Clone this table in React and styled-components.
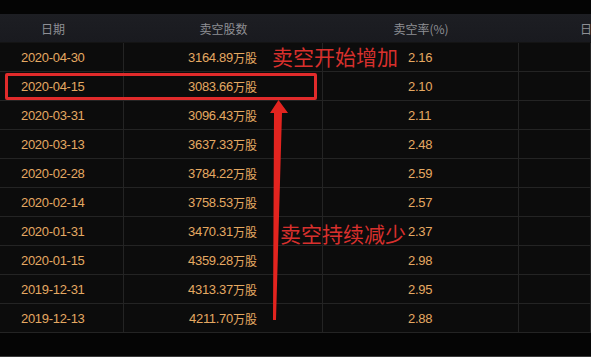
import React from 'react';
import styled, { createGlobalStyle } from 'styled-components';

const GlobalStyle = createGlobalStyle`
  html, body {
    margin: 0;
    padding: 0;
    background-color: #050505;
    overflow: hidden;
  }
`;

const COLUMNS = '124px 199px 196px 1fr';

const Page = styled.div`
  position: relative;
  width: 591px;
  height: 357px;
  overflow: hidden;
  background-color: #050505;
  font-family: "Liberation Sans", "Noto Sans CJK SC", sans-serif;
`;

const TopBand = styled.div`
  height: 14px;
  background-color: #040404;
`;

const HeaderRow = styled.div`
  display: grid;
  grid-template-columns: ${COLUMNS};
  height: 28px;
  background: linear-gradient(#1d1e23, #191a1f);
  border-bottom: 1px solid #141414;
`;

const HeaderCell = styled.div`
  display: flex;
  align-items: center;
  justify-content: ${(p) => (p.$left ? 'flex-start' : 'center')};
  padding-left: ${(p) => p.$pad || 0}px;
  padding-right: ${(p) => p.$padRight || 0}px;
  font-family: "Noto Sans CJK SC", sans-serif;
  font-size: 12px;
  color: #8e8f94;
  white-space: nowrap;
`;

const Body = styled.div`
  background-color: #0c0c0c;
`;

const Row = styled.div`
  display: grid;
  grid-template-columns: ${COLUMNS};
  height: 28px;
  border-bottom: 1px solid #242424;
`;

const Cell = styled.div`
  display: flex;
  align-items: center;
  justify-content: ${(p) => p.$align || 'flex-start'};
  padding-left: ${(p) => p.$pad || 0}px;
  padding-right: ${(p) => p.$padRight || 0}px;
  border-right: 1px solid #242424;
  font-size: 13px;
  letter-spacing: -0.3px;
  color: #e5a962;
  white-space: nowrap;
`;

const Unit = styled.span`
  font-family: "Noto Sans CJK SC", sans-serif;
  font-size: 12px;
  letter-spacing: 0;
`;

const Footer = styled.div`
  height: 23px;
  border-bottom: 1px solid #3a3a3a;
`;

const Highlight = styled.div`
  position: absolute;
  left: 5px;
  top: 73px;
  width: 306px;
  height: 21px;
  border: 3px solid #e12b2b;
  border-radius: 2px;
`;

const Note = styled.div`
  position: absolute;
  left: ${(p) => p.$x}px;
  top: ${(p) => p.$y}px;
  font-family: "Noto Sans CJK SC", sans-serif;
  font-size: 21px;
  line-height: 1;
  color: #d8302d;
  white-space: nowrap;
`;

const Arrow = styled.svg`
  position: absolute;
  left: 0;
  top: 0;
`;

const rows = [
  ['2020-04-30', '3164.89', '2.16'],
  ['2020-04-15', '3083.66', '2.10'],
  ['2020-03-31', '3096.43', '2.11'],
  ['2020-03-13', '3637.33', '2.48'],
  ['2020-02-28', '3784.22', '2.59'],
  ['2020-02-14', '3758.53', '2.57'],
  ['2020-01-31', '3470.31', '2.37'],
  ['2020-01-15', '4359.28', '2.98'],
  ['2019-12-31', '4313.37', '2.95'],
  ['2019-12-13', '4211.70', '2.88'],
];

export default function App() {
  return (
    <Page>
      <GlobalStyle />
      <TopBand />
      <HeaderRow>
        <HeaderCell $left $pad={41}>日期</HeaderCell>
        <HeaderCell>卖空股数</HeaderCell>
        <HeaderCell>卖空率(%)</HeaderCell>
        <HeaderCell $left $pad={61}>日期</HeaderCell>
      </HeaderRow>
      <Body>
        {rows.map(([date, shares, rate]) => (
          <Row key={date}>
            <Cell $pad={21}>{date}</Cell>
            <Cell $align="flex-end" $padRight={65}>
              {shares}
              <Unit>万股</Unit>
            </Cell>
            <Cell $pad={85}>{rate}</Cell>
            <Cell />
          </Row>
        ))}
      </Body>
      <Footer />

      <Highlight />
      <Note $x={272} $y={46}>卖空开始增加</Note>
      <Note $x={280} $y={223}>卖空持续减少</Note>
      <Arrow width="591" height="357" viewBox="0 0 591 357">
        <polygon points="278.5,100 288,113 282,113 276,320 273,320 274,113 270,113" fill="#e3241f" />
      </Arrow>
    </Page>
  );
}
